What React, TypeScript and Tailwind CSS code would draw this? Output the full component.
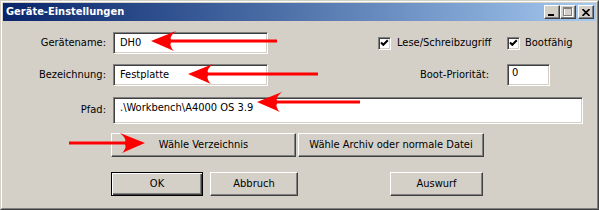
import type { ReactNode } from 'react'

const raised =
  'border border-t-white border-l-white border-r-[#404040] border-b-[#404040] shadow-[inset_-1px_-1px_0_#808080] bg-[#d4d0c8]'
const sunken =
  'border border-t-[#808080] border-l-[#808080] border-r-white border-b-white shadow-[inset_1px_1px_0_#404040,inset_-1px_-1px_0_#d4d0c8] bg-white'

function Label({ children }: { children: ReactNode }) {
  return <div className="w-[103px] shrink-0 text-right">{children}</div>
}

function Input({ value, className }: { value: string; className: string }) {
  return (
    <div className={`${sunken} shrink-0 flex items-center pl-[6px] ${className}`}>
      {value}
    </div>
  )
}

function Checkbox() {
  return (
    <div className={`${sunken} w-[13px] h-[13px] shrink-0 relative`}>
      <svg className="absolute left-0 top-0" width="11" height="11" viewBox="0 0 11 11">
        <path d="M2 4.5 L4.3 6.8 L8.8 2.3" stroke="#000" strokeWidth="2" fill="none" />
      </svg>
    </div>
  )
}

function Button({ children, className }: { children: ReactNode; className: string }) {
  return (
    <div className={`${raised} shrink-0 h-[24px] flex items-center justify-center ${className}`}>
      {children}
    </div>
  )
}

function TitleButton({ children, className = '' }: { children: ReactNode; className?: string }) {
  return (
    <div className={`${raised} w-[16px] h-[14px] flex items-center justify-center ${className}`}>
      {children}
    </div>
  )
}

// arrowhead pointing left with tip at 0,0
const head = 'M0 0 L25 -10 Q18 -4 20 -1.5 L20 1.5 Q18 5 23 10 Z'

function Arrow({ x, y, to, flip = false }: { x: number; y: number; to: number; flip?: boolean }) {
  const len = Math.abs(to - x)
  return (
    <g transform={`translate(${x},${y}) scale(${flip ? -1 : 1},1)`}>
      <path d={head} fill="#ff0000" />
      <rect x="18" y="-1.5" width={len - 18} height="3" fill="#ff0000" />
    </g>
  )
}

export default function App() {
  return (
    <div className="relative w-[599px] h-[210px] border border-t-[#d4d0c8] border-l-[#d4d0c8] border-r-[#404040] border-b-[#404040] font-['DejaVu_Sans_Condensed','Liberation_Sans',sans-serif] text-[11px] text-black">
      <div className="h-full border border-t-white border-l-white border-r-[#808080] border-b-[#808080] bg-[#d4d0c8] p-px flex flex-col">
        {/* title bar */}
        <div className="h-[18px] shrink-0 bg-linear-to-r from-[#0a246a] to-[#a6caf0] flex items-center pl-[3px] pr-[2px]">
          <span className="font-bold text-white">Geräte-Einstellungen</span>
          <div className="ml-auto flex items-center">
            <TitleButton>
              <div className="w-[6px] h-[2px] bg-black mt-[6px] -ml-[2px]" />
            </TitleButton>
            <TitleButton>
              <svg width="10" height="10" viewBox="0 0 10 10">
                <rect x="1.5" y="1.5" width="8" height="8" fill="none" stroke="#fff" />
                <rect x="0.5" y="0.5" width="8" height="8" fill="none" stroke="#808080" />
                <rect x="0" y="1" width="9" height="1" fill="#808080" />
              </svg>
            </TitleButton>
            <TitleButton className="ml-[2px]">
              <svg width="8" height="7" viewBox="0 0 8 7">
                <path d="M0.5 0 L7.5 7 M7.5 0 L0.5 7" stroke="#000" strokeWidth="1.6" />
              </svg>
            </TitleButton>
          </div>
        </div>

        {/* row 1 */}
        <div className="mt-[11px] h-[22px] flex items-center">
          <Label>Gerätename:</Label>
          <Input value="DH0" className="ml-[7px] w-[155px] h-[22px]" />
          <div className="ml-[110px] flex items-center">
            <Checkbox />
            <span className="ml-[6px] w-[110px]">Lese/Schreibzugriff</span>
            <Checkbox />
            <span className="ml-[5px]">Bootfähig</span>
          </div>
        </div>

        {/* row 2 */}
        <div className="mt-[10px] h-[22px] flex items-center">
          <Label>Bezeichnung:</Label>
          <Input value="Festplatte" className="ml-[7px] w-[155px] h-[22px]" />
          <div className="w-[221px] text-right">Boot-Priorität:</div>
          <div className={`${sunken} ml-[18px] w-[43px] h-[22px] pl-[4px] pt-[1px] leading-[14px]`}>0</div>
        </div>

        {/* row 3 */}
        <div className="mt-[11px] h-[27px] flex items-center">
          <Label>Pfad:</Label>
          <div className={`${sunken} ml-[7px] w-[470px] h-[27px] pl-[6px] pt-[3px] leading-[14px]`}>
            .\Workbench\A4000 OS 3.9
          </div>
        </div>

        {/* row 4 */}
        <div className="mt-[9px] ml-[108px] flex gap-[2px]">
          <Button className="w-[185px]">Wähle Verzeichnis</Button>
          <Button className="w-[186px]">Wähle Archiv oder normale Datei</Button>
        </div>

        {/* row 5 */}
        <div className="mt-[15px] ml-[108px] flex">
          <Button className="w-[92px] !border-black shadow-[inset_1px_1px_0_#fff,inset_-1px_-1px_0_#404040,inset_-2px_-2px_0_#808080]">
            OK
          </Button>
          <Button className="ml-[7px] w-[88px]">Abbruch</Button>
          <Button className="ml-[92px] w-[93px]">Auswurf</Button>
        </div>
      </div>

      <svg className="absolute -left-px -top-px pointer-events-none" width="599" height="210" viewBox="0 0 599 210">
        <Arrow x={151} y={41} to={277} />
        <Arrow x={188} y={74} to={318} />
        <Arrow x={257} y={102} to={360} />
        <Arrow x={145} y={143} to={69} flip />
      </svg>
    </div>
  )
}
